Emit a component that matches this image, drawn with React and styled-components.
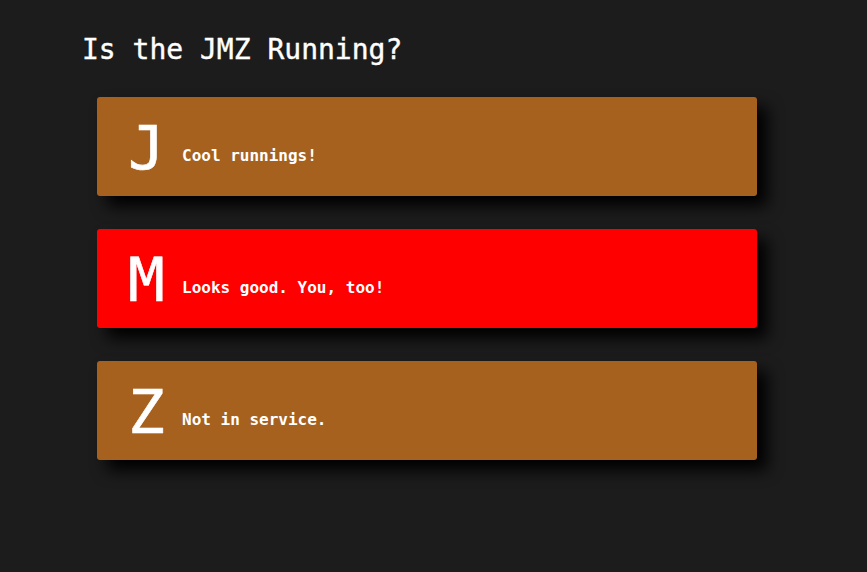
import React from "react";
import styled, { createGlobalStyle } from "styled-components";

const GlobalStyle = createGlobalStyle`
  html, body {
    margin: 0;
    padding: 0;
    background: #1c1c1c;
  }
  body {
    font-family: "DejaVu Sans Mono", "Liberation Mono", monospace;
    color: #fff;
    -webkit-font-smoothing: antialiased;
  }
`;

const Page = styled.main`
  min-height: 572px;
  padding: 30px 110px 0 82px;
  box-sizing: border-box;
`;

const Title = styled.h1`
  margin: 0 0 27px;
  font-size: 28px;
  font-weight: normal;
  line-height: 40px;
  -webkit-text-stroke: 0.4px #fff;
`;

const List = styled.ul`
  list-style: none;
  margin: 0;
  padding: 0 0 0 15px;
  display: flex;
  flex-direction: column;
  gap: 33px;
`;

const Card = styled.li`
  display: flex;
  align-items: center;
  gap: 22px;
  width: 660px;
  height: 99px;
  box-sizing: border-box;
  padding: 0 31px;
  border-radius: 3px;
  background: ${(p) => (p.$alert ? "#ff0000" : "#a6611f")};
  box-shadow: 10px 10px 16px #000;
`;

const Letter = styled.span`
  font-size: 61px;
  line-height: 1;
  width: 32px;
  padding-top: 2px;
  -webkit-text-stroke: 0.6px #fff;
`;

const Status = styled.span`
  font-size: 16px;
  font-weight: bold;
  padding-top: 17px;
`;

const lines = [
  { name: "J", status: "Cool runnings!" },
  { name: "M", status: "Looks good. You, too!", alert: true },
  { name: "Z", status: "Not in service." },
];

const App = () => {
  return (
    <>
      <GlobalStyle />
      <Page>
        <Title>Is the JMZ Running?</Title>
        <List>
          {lines.map((l) => (
            <Card key={l.name} $alert={l.alert}>
              <Letter>{l.name}</Letter>
              <Status>{l.status}</Status>
            </Card>
          ))}
        </List>
      </Page>
    </>
  );
};

export default App;
